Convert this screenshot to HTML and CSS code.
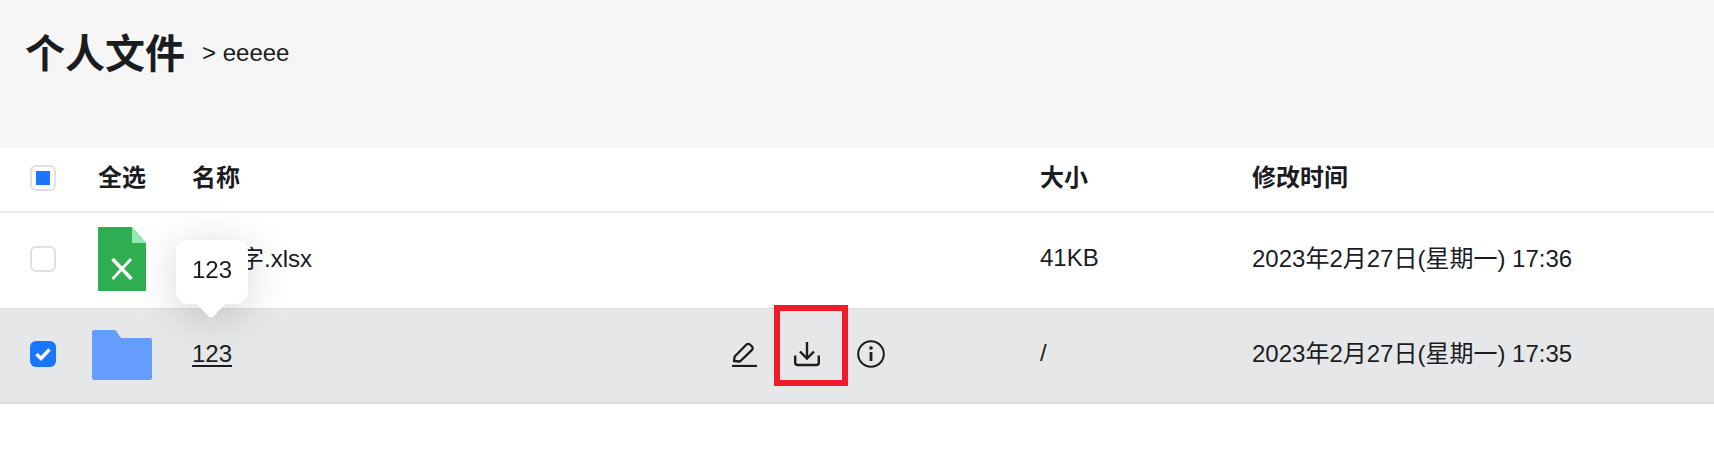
FILE: index.html
```html
<!DOCTYPE html>
<html lang="zh-CN">
<head>
  <meta charset="UTF-8" />
  <title>个人文件</title>
  <link rel="stylesheet" href="styles.css">
</head>
<body>
  <header class="page-head">
    <h1 class="page-title">个人文件</h1>
    <span class="crumb">&gt; eeeee</span>
  </header>

  <div class="file-list">
    <div class="row row-head">
      <span class="check check-some"><i></i></span>
      <span class="cell-all">全选</span>
      <span class="cell-name">名称</span>
      <span class="cell-size">大小</span>
      <span class="cell-time">修改时间</span>
    </div>

    <div class="row row-file">
      <span class="check"></span>
      <span class="cell-all">
        <svg viewBox="0 0 48 64" width="48" height="64">
          <path d="M1 0H34L48 16V63a1 1 0 0 1-1 1H1a1 1 0 0 1-1-1V1a1 1 0 0 1 1-1z" fill="#2eae50"/>
          <path d="M34 0L48 16H34z" fill="#93e9b2"/>
          <path d="M14.500 32L33.500 52" stroke="#fff" stroke-width="3.600" fill="none"/>
          <path d="M33 32L14.500 52" stroke="#fff" stroke-width="2.600" fill="none"/>
        </svg>
      </span>
      <span class="cell-name cell-covered">字.xlsx</span>
      <span class="cell-size">41KB</span>
      <span class="cell-time">2023年2月27日(星期一) 17:36</span>
    </div>

    <div class="row row-file row-active">
      <span class="check check-on">
        <svg viewBox="0 0 26 26" width="26" height="26">
          <path d="M6.500 13L11 17.500L19.500 8.500" stroke="#fff" stroke-width="3.400" fill="none"/>
        </svg>
      </span>
      <span class="cell-all">
        <svg class="icon-folder" viewBox="0 0 60 50" width="60" height="50">
          <path d="M2 0H22a3 3 0 0 1 2.400 1.200L29 8H58a2 2 0 0 1 2 2V48a2 2 0 0 1-2 2H2a2 2 0 0 1-2-2V2a2 2 0 0 1 2-2z" fill="#659dff"/>
        </svg>
      </span>
      <span class="cell-name cell-link">
        <a class="file-link">123</a>
        <span class="row-actions">
          <svg viewBox="0 0 26 26" width="26" height="26" fill="none" stroke="#1a1c1f" stroke-width="2.300">
            <path d="M3 20L3.700 15.500L15.500 3.500a2.400 2.400 0 0 1 3.400 0L21 5.500a2.400 2.400 0 0 1 0 3.400L9 20.500L3 20z" stroke-linejoin="round"/>
            <path d="M1 25H26"/>
          </svg>
          <svg viewBox="0 0 26 26" width="26" height="26" fill="none" stroke="#1a1c1f" stroke-width="2.400">
            <path d="M13 1V17.500M6 10.500L13 17.500L20 10.500"/>
            <path d="M1.200 14.500V21.500a2.500 2.500 0 0 0 2.500 2.500H22.300a2.500 2.500 0 0 0 2.500-2.500V14.500"/>
          </svg>
          <svg viewBox="0 0 28 28" width="28" height="28" fill="none" stroke="#1a1c1f" stroke-width="2">
            <circle cx="14" cy="14" r="12.800"/>
            <path d="M14 12V21" stroke-width="2.800"/>
            <circle cx="14" cy="8" r="1.800" fill="#1a1c1f" stroke="none"/>
          </svg>
        </span>
      </span>
      <span class="cell-size">/</span>
      <span class="cell-time">2023年2月27日(星期一) 17:35</span>
    </div>
  </div>

  <div class="tooltip">123</div>
  <div class="mark-box"></div>
</body>
</html>
```

FILE: styles.css
```css
* {
  margin: 0;
  padding: 0;
  box-sizing: border-box;
}

body {
  position: relative;
  height: 452px;
  overflow: hidden;
  background-color: #ffffff;
  color: #1a1c1f;
  font-family: "Liberation Sans", "Noto Sans CJK SC", sans-serif;
  font-size: 24px;
}

.page-head {
  display: flex;
  align-items: flex-start;
  gap: 17px;
  height: 148px;
  padding: 26px 25px 0;
  background-color: #f6f6f6;
}

.page-title {
  font-size: 40px;
  font-weight: 700;
  line-height: 56px;
}

.crumb {
  margin-top: 13px;
  line-height: 28px;
}

.row {
  display: grid;
  grid-template-columns: 68px 94px 848px 212px 1fr;
  align-items: center;
  padding-left: 30px;
}

.row-head {
  height: 65px;
  padding-bottom: 4px;
  font-weight: 700;
  border-bottom: 2px solid #e8e9eb;
}

.row-file {
  height: 95px;
  padding-bottom: 4px;
}

.row-active {
  height: 96px;
  padding-bottom: 3px;
  background-color: #e6e7e9;
  border-top: 1px solid #dcdde0;
  border-bottom: 2px solid #dcdde0;
}

.cell-name {
  padding-bottom: 5px;
}

.cell-size {
  padding-bottom: 2px;
}

.cell-time {
  padding-bottom: 5px;
}

.row-head .cell-all,
.row-head .cell-name,
.row-head .cell-size,
.row-head .cell-time {
  padding-bottom: 5px;
}

.check {
  display: flex;
  align-items: center;
  justify-content: center;
  width: 26px;
  height: 26px;
  border: 2px solid #dfe0e2;
  border-radius: 6px;
  background-color: #ffffff;
}

.check-some i {
  display: block;
  width: 14px;
  height: 14px;
  background-color: #1a76ff;
}

.check-on {
  border: none;
  background-color: #1a76ff;
}

.cell-all {
  display: flex;
}

.icon-folder {
  margin: 2px 0 0 -6px;
}

/* the tooltip sits on top of the start of this name */
.cell-covered {
  padding-left: 48px;
}

.cell-link {
  display: flex;
  align-items: center;
  padding-bottom: 1px;
}

.file-link {
  text-decoration: underline;
  text-decoration-thickness: 2px;
  text-underline-offset: 3px;
}

.row-actions {
  display: flex;
  align-items: center;
  gap: 37px;
  margin-left: 499px;
}

.tooltip {
  position: absolute;
  left: 176px;
  top: 240px;
  width: 72px;
  height: 64px;
  border-radius: 12px;
  background-color: #ffffff;
  filter: drop-shadow(0 6px 20px rgba(0, 0, 0, 0.16));
  line-height: 60px;
  text-align: center;
}

.tooltip::after {
  content: "";
  position: absolute;
  left: 24px;
  top: 52px;
  width: 22px;
  height: 22px;
  border-radius: 3px;
  background-color: #ffffff;
  transform: rotate(45deg);
}

.mark-box {
  position: absolute;
  left: 774px;
  top: 305px;
  width: 74px;
  height: 81px;
  border: 6px solid #ee1c2b;
}
```
